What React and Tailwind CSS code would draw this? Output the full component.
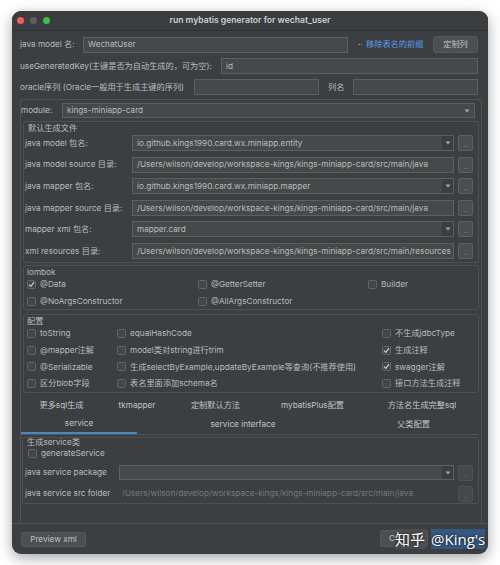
import React from "react";

const FONT = "font-['Inter','Noto_Sans_CJK_SC',sans-serif]";

function Arrow({ color = "#a9a9a9" }) {
  return (
    <svg width="6" height="4" viewBox="0 0 6 4">
      <path d="M0.5 0.5 L5.5 0.5 L3 3.5 Z" fill={color} />
    </svg>
  );
}

function Field({ className = "", children, muted }) {
  return (
    <div
      className={`h-[16px] shrink-0 border border-[#5d6062] bg-[#45494a] flex items-center pl-[4px] overflow-hidden whitespace-nowrap ${
        muted ? "text-[#7b7d7f]" : "text-[#bbbbbb]"
      } ${className}`}
    >
      {children}
    </div>
  );
}

function Combo({ className = "", children, plain }) {
  return (
    <div
      className={`h-[16px] shrink-0 border border-[#5d6062] bg-[#45494a] flex items-center overflow-hidden whitespace-nowrap text-[#bbbbbb] ${className}`}
    >
      <span className="flex-1 pl-[4px] truncate">{children}</span>
      {plain ? (
        <span className="w-[14px] h-[14px] flex items-center justify-center">
          <Arrow />
        </span>
      ) : (
        <span className="w-[11px] h-[14px] bg-[#3b3e40] flex items-center justify-center">
          <Arrow />
        </span>
      )}
    </div>
  );
}

function Dots() {
  return (
    <div className="w-[15px] h-[16px] shrink-0 rounded-[2px] border border-[#5d6062] bg-[#4a4e50] flex items-end justify-center pb-[2px]">
      <span className="text-[6px] leading-[6px] tracking-[-0.5px] text-[#9a9a9a]">...</span>
    </div>
  );
}

function Check({ checked }) {
  return (
    <span className="w-[9px] h-[9px] shrink-0 rounded-[1.5px] border border-[#626567] bg-[#43474a] flex items-center justify-center">
      {checked && (
        <svg width="7" height="7" viewBox="0 0 7 7">
          <path d="M1 3.7 L2.8 5.4 L6 1.2" stroke="#d0d0d0" strokeWidth="1.1" fill="none" />
        </svg>
      )}
    </span>
  );
}

function CB({ checked, children, className = "" }) {
  return (
    <div className={`flex items-center gap-[4px] whitespace-nowrap ${className}`}>
      <Check checked={checked} />
      <span>{children}</span>
    </div>
  );
}

const PATH = "/Users/wilson/develop/workspace-kings/kings-miniapp-card/src/main/";

const fileRows = [
  ["java model 包名:", "combo", "io.github.kings1990.card.wx.miniapp.entity"],
  ["java model source 目录:", "field", PATH + "java"],
  ["java mapper 包名:", "combo", "io.github.kings1990.card.wx.miniapp.mapper"],
  ["java mapper source 目录:", "field", PATH + "java"],
  ["mapper xml 包名:", "combo", "mapper.card"],
  ["xml resources 目录:", "field", PATH + "resources"],
];

export default function App() {
  return (
    <div className={`w-[500px] h-[565px] bg-white pt-[11px] pl-[12px] ${FONT} text-[8.2px] text-[#bbbbbb]`}>
      <div className="relative w-[476px] h-[543px] rounded-[9px] bg-[#3c3f41] shadow-[0_4px_14px_rgba(0,0,0,0.35)] flex flex-col overflow-hidden">
        {/* title bar */}
        <div className="relative h-[20px] shrink-0 border-b border-[#2c2e2f] bg-[#3a3d3f] flex items-center justify-center">
          <div className="absolute left-[5px] top-[6px] flex gap-[6px]">
            <span className="w-[7px] h-[7px] rounded-full bg-[#ed5f58]" />
            <span className="w-[7px] h-[7px] rounded-full bg-[#5d5f61]" />
            <span className="w-[7px] h-[7px] rounded-full bg-[#3cbe47]" />
          </div>
          <span className="font-semibold text-[8.6px] text-[#d0d0d0]">run mybatis generator for wechat_user</span>
        </div>

        {/* body */}
        <div className="flex-1 flex flex-col pl-[8px] pr-[6px]">
          <div className="w-[458px] flex flex-col">
            {/* row 1 */}
            <div className="mt-[5px] h-[17px] flex items-center">
              <span className="w-[63px] shrink-0">java model 名:</span>
              <Field className="w-[265px]">WechatUser</Field>
              <span className="ml-[10px] flex items-center gap-[1px] mr-[3px]">
                <span className="w-[1.5px] h-[1.5px] bg-[#8a8a8a]" />
                <span className="w-[1.5px] h-[1.5px] bg-[#8a8a8a]" />
              </span>
              <span className="text-[#5a9cf0] ml-[1px]">移除表名的前缀</span>
              <button className="ml-auto w-[45px] h-[17px] rounded-[3px] border border-[#565a5c] bg-[#4b4f51] text-[#c0c0c0] flex items-center justify-center">
                定制列
              </button>
            </div>
            {/* row 2 */}
            <div className="mt-[5px] h-[16px] flex items-center">
              <span className="w-[201px] shrink-0 whitespace-nowrap">useGeneratedKey(主键是否为自动生成的，可为空):</span>
              <Field className="flex-1">id</Field>
            </div>
            {/* row 3 */}
            <div className="mt-[5px] h-[16px] flex items-center">
              <span className="w-[174px] shrink-0 whitespace-nowrap">oracle序列 (Oracle一般用于生成主键的序列)</span>
              <Field className="w-[125px]" />
              <span className="ml-[9px] w-[25px] shrink-0">列名</span>
              <Field className="w-[125px]" />
            </div>
          </div>

          {/* outer panel */}
          <div className="mt-[4px] flex-1 border-t border-l border-r border-[#515456] rounded-t-[3px] flex flex-col">
            {/* module */}
            <div className="mt-[3px] h-[15px] flex items-center">
              <span className="w-[41px] shrink-0">module:</span>
              <Combo plain className="w-[413px] !h-[15px]">kings-miniapp-card</Combo>
            </div>

            {/* 默认生成文件 */}
            <div className="mt-[3px] mx-[2px] border border-[#4e5153] rounded-[3px] pl-[1px] pr-[5px] pb-[3px]">
              <div className="h-[13px] pl-[3px] flex items-center">默认生成文件</div>
              <div className="flex flex-col gap-[5.6px]">
                {fileRows.map(([label, kind, value]) => (
                  <div key={label} className="h-[16px] flex items-center">
                    <span className="w-[107px] shrink-0 whitespace-nowrap">{label}</span>
                    {kind === "combo" ? (
                      <Combo className="w-[322px]">{value}</Combo>
                    ) : (
                      <Field className="w-[322px]">{value}</Field>
                    )}
                    <span className="ml-[4px]">
                      <Dots />
                    </span>
                  </div>
                ))}
              </div>
            </div>

            {/* lombok */}
            <div className="mt-[2px] mx-[2px] border border-[#4e5153] rounded-[3px] pl-[3px] pb-[1px]">
              <div className="h-[12px] flex items-center">lombok</div>
              <div className="h-[13px] flex items-center">
                <CB checked className="w-[171px]">@Data</CB>
                <CB className="w-[170px]">@GetterSetter</CB>
                <CB>Builder</CB>
              </div>
              <div className="mt-[4px] h-[13px] flex items-center">
                <CB className="w-[171px]">@NoArgsConstructor</CB>
                <CB>@AllArgsConstructor</CB>
              </div>
            </div>

            {/* 配置 */}
            <div className="mt-[4px] mx-[2px] border border-[#4e5153] rounded-[3px] pl-[3px] pb-[2px]">
              <div className="h-[12px] flex items-center">配置</div>
              <div className="flex flex-col gap-[3.7px]">
                <div className="h-[13px] flex items-center">
                  <CB className="w-[90px]">toString</CB>
                  <CB className="w-[265px]">equalHashCode</CB>
                  <CB>不生成jdbcType</CB>
                </div>
                <div className="h-[13px] flex items-center">
                  <CB className="w-[90px]">@mapper注解</CB>
                  <CB className="w-[265px]">model类对string进行trim</CB>
                  <CB checked>生成注释</CB>
                </div>
                <div className="h-[13px] flex items-center">
                  <CB className="w-[90px]">@Serializable</CB>
                  <CB className="w-[265px]">生成selectByExample,updateByExample等查询(不推荐使用)</CB>
                  <CB checked>swagger注解</CB>
                </div>
                <div className="h-[13px] flex items-center">
                  <CB className="w-[90px]">区分blob字段</CB>
                  <CB className="w-[265px]">表名里面添加schema名</CB>
                  <CB>接口方法生成注释</CB>
                </div>
              </div>
            </div>

            {/* tabs */}
            <div className="mt-[3px] border-b border-[#515456] mr-[2px]">
              <div className="h-[18px] flex items-center text-[#c2c2c2]">
                <span className="w-[81px] text-center">更多sql生成</span>
                <span className="w-[70px] text-center">tkmapper</span>
                <span className="w-[87px] text-center">定制默认方法</span>
                <span className="w-[107px] text-center">mybatisPlus配置</span>
                <span className="w-[112px] text-center">方法名生成完整sql</span>
              </div>
              <div className="h-[20px] flex text-[#c2c2c2]">
                <span className="w-[116px] flex items-center justify-center border-b-2 border-[#4b87c5]">service</span>
                <span className="w-[212px] flex items-center justify-center">service interface</span>
                <span className="w-[129px] flex items-center justify-center">父类配置</span>
              </div>
            </div>

            {/* service panel */}
            <div className="mt-[2px] ml-[1px] mr-[2px] border border-[#4e5153] rounded-[3px] pl-[2px] pr-[5px] pb-[2px]">
              <div className="h-[8px] leading-[8px] pl-[2px] overflow-visible">生成service类</div>
              <div className="h-[14px] flex items-center pl-[3px]">
                <CB>generateService</CB>
              </div>
              <div className="mt-[5px] h-[15px] flex items-center">
                <span className="w-[94px] shrink-0 whitespace-nowrap">java service package</span>
                <Combo className="w-[335px] !h-[15px]" />
                <span className="ml-[4px] opacity-60">
                  <Dots />
                </span>
              </div>
              <div className="mt-[6px] h-[15px] flex items-center">
                <span className="w-[97px] shrink-0 whitespace-nowrap">java service src folder</span>
                <span className="w-[332px] shrink-0 text-[#76797b] whitespace-nowrap overflow-hidden">{PATH + "java"}</span>
                <span className="ml-[4px] opacity-60">
                  <Dots />
                </span>
              </div>
            </div>
          </div>
        </div>

        {/* bottom bar */}
        <div className="h-[31px] shrink-0 border-t border-[#515456] flex items-start pt-[8px] pl-[9px] pr-[8px]">
          <button className="w-[65px] h-[15px] rounded-[2px] border border-[#54585a] bg-[#4b4f51] text-[#c0c0c0] flex items-center justify-center">
            Preview xml
          </button>
          <button className="ml-auto w-[48px] h-[17px] rounded-[2px] border border-[#54585a] bg-[#4b4f51] text-[#c0c0c0] flex items-center justify-start pl-[8px] -mt-[2px]">
            Cancel
          </button>
          <button className="ml-[4px] w-[48px] h-[15px] rounded-[2px] bg-[#365880] text-white flex items-center justify-center -mt-[2px]">
            OK
          </button>
        </div>

        {/* watermark */}
        <div className="absolute left-[383px] top-[518px] flex items-center gap-[6px] whitespace-nowrap text-[15px] leading-[20px] text-white [text-shadow:0_0_3px_rgba(0,0,0,0.9)] font-['Noto_Sans_CJK_SC',sans-serif]">
          <span className="bg-[#4b4f51] whitespace-nowrap">知乎</span>
          <span className="bg-[#365880] whitespace-nowrap font-['Open_Sans','Noto_Sans_CJK_SC',sans-serif]">@King's</span>
        </div>
      </div>
    </div>
  );
}
